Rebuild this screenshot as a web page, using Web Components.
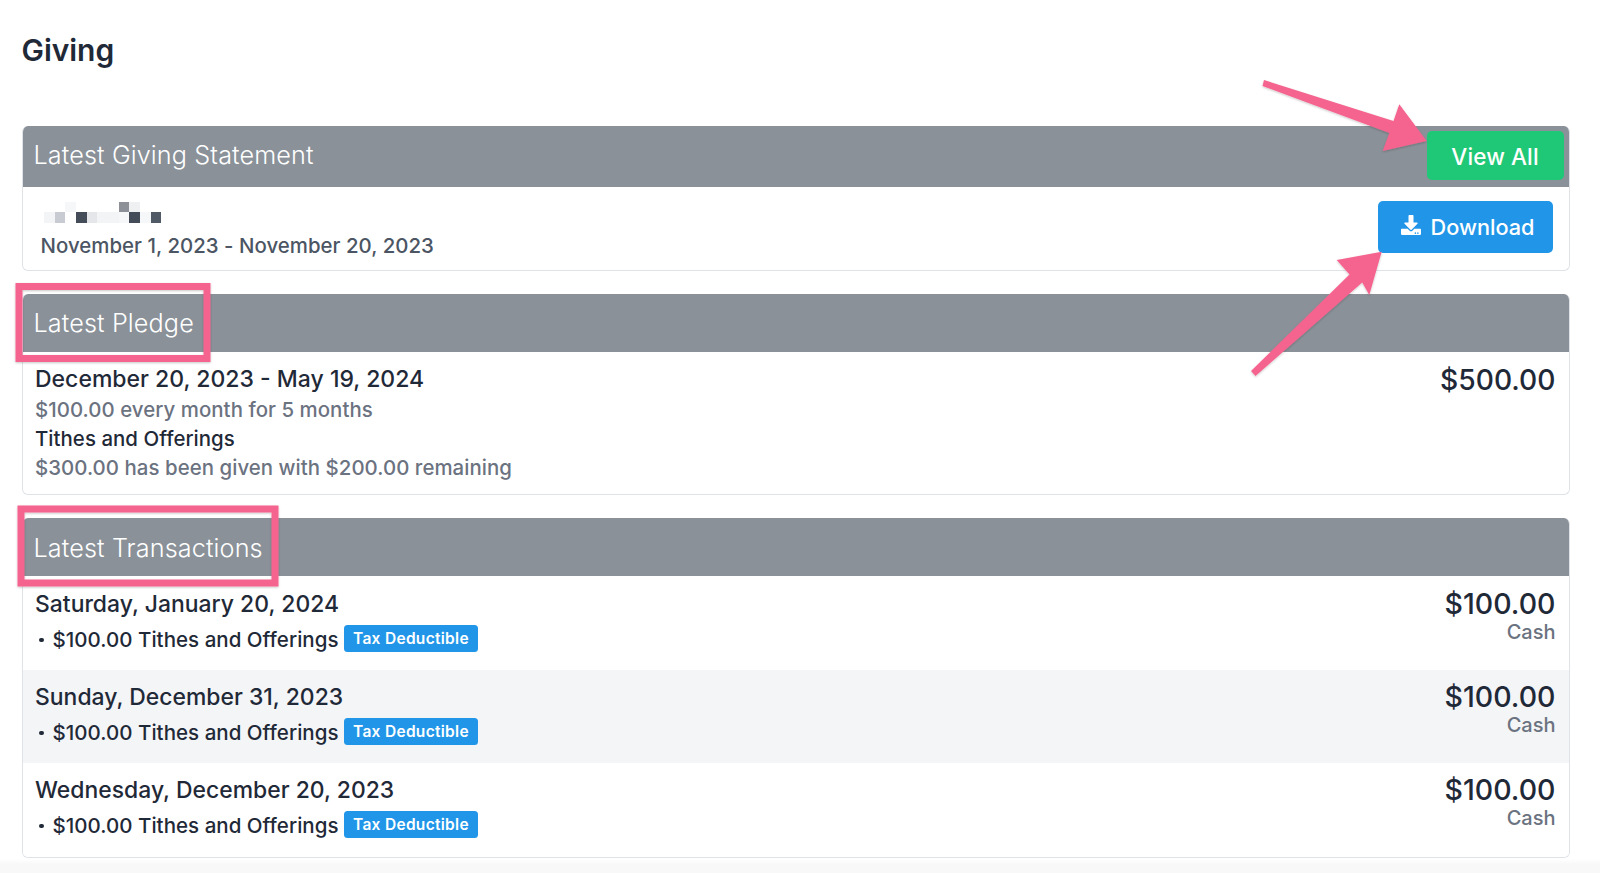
<!DOCTYPE html>
<html><head><meta charset="utf-8"><title>Giving</title>
<style>
html,body{margin:0;padding:0;background:#fff;}
body{font-family:Inter,"Liberation Sans",sans-serif;color:#1f2937;width:1600px;height:873px;overflow:hidden;position:relative;}
</style></head><body>
<giving-page>
  <page-title>Giving</page-title>
  <info-card heading="Latest Giving Statement" style="--hh:61px;--mt:0px;--to:-1px">
    <action-button slot="action" kind="green">View All</action-button>
    <statement-row range="November 1, 2023 - November 20, 2023"></statement-row>
  </info-card>
  <info-card heading="Latest Pledge" style="--hh:58px;--mt:23px;--to:0px">
    <pledge-row></pledge-row>
  </info-card>
  <info-card heading="Latest Transactions" style="--hh:58px;--mt:23px;--to:1px">
    <tx-row date="Saturday, January 20, 2024" first></tx-row>
    <tx-row date="Sunday, December 31, 2023" striped></tx-row>
    <tx-row date="Wednesday, December 20, 2023" last></tx-row>
  </info-card>
</giving-page>
<markup-layer></markup-layer>
<script>
function def(name, css, html){
  customElements.define(name, class extends HTMLElement{
    connectedCallback(){
      if(this.shadowRoot) return;
      const r=this.attachShadow({mode:'open'});
      const h=typeof html==='function'?html(this):html;
      r.innerHTML='<style>'+css+'</style>'+h;
    }
  });
}
def('giving-page',':host{display:block;box-sizing:border-box;padding:0 30.5px 0 21.5px;height:873px;background:linear-gradient(#fff 859px,#f8f8f9 864px)}','<slot></slot>');
def('page-title',':host{display:block;height:125.5px;box-sizing:border-box;padding-top:29.5px;font-size:30px;line-height:40px;font-weight:600;color:#1f2937;letter-spacing:-.05px}','<slot></slot>');
def('info-card',':host{display:block;margin-top:var(--mt);border:1px solid #dfe3e8;border-top:0;border-radius:6px;background:#fff;overflow:hidden}'+
 '.h{height:var(--hh);background:#8a9198;display:flex;align-items:center;justify-content:space-between;padding:0 6px 0 12px;margin:0 -1px;color:#fff;font-size:25.2px;line-height:30px;font-weight:300;letter-spacing:.12px}.h span{position:relative;top:var(--to)}',
 e=>`<div class="h"><span>${e.getAttribute('heading')}</span><slot name="action"></slot></div><slot></slot>`);
def('action-button',':host{display:inline-flex;align-items:center;justify-content:center;box-sizing:border-box;border-radius:5px;color:#fff;font-weight:500;font-size:22.5px;background:#1fc876;width:137px;height:49px;padding-top:2px;margin-top:-1px}'+
 ':host([kind=blue]){background:#2196e9;width:175px;height:52px;gap:10px;font-size:21.7px;padding:0 0 0 5px;margin-top:0}svg{width:20px;height:20px;fill:currentColor;margin-top:-3px}',
 e=>(e.getAttribute('kind')==='blue'?'<svg viewBox="0 0 512 512"><path d="M216 0h80c13.3 0 24 10.7 24 24v168h87.7c17.8 0 26.7 21.5 14.1 34.1L269.7 378.3c-7.5 7.5-19.8 7.5-27.3 0L90.1 226.1c-12.6-12.6-3.7-34.1 14.1-34.1H192V24c0-13.3 10.7-24 24-24zm296 376v112c0 13.3-10.7 24-24 24H24c-13.3 0-24-10.7-24-24V376c0-13.3 10.7-24 24-24h146.7l49 49c20.1 20.1 52.5 20.1 72.6 0l49-49H488c13.3 0 24 10.7 24 24zm-124 88c0-11-9-20-20-20s-20 9-20 20 9 20 20 20 20-9 20-20zm64 0c0-11-9-20-20-20s-20 9-20 20 9 20 20 20 20-9 20-20z"/></svg>':'')+'<slot></slot>');
def('pixel-mask',':host{display:grid;grid-template-columns:repeat(11,10.67px);grid-auto-rows:10.9px;width:max-content;margin-left:3.5px}',
 ()=>{const c=['','','#f6f7f8','','','','','#8d9096','#eef0f2','','','#f3f4f5','#c8ccd2','','#454c59','#e4e6e9','#f3f4f5','#f3f4f5','#f6f7f8','#454c59','#f6f7f8','#505a66'];
  return c.map(x=>`<i style="background:${x||'transparent'}"></i>`).join('');});
def('statement-row',':host{display:flex;justify-content:space-between;height:83px;box-sizing:border-box;padding:15px 16px 0 18px}'+
 '.r{font-size:20.4px;line-height:28px;font-weight:500;color:#4b5563;margin-top:9px;letter-spacing:.03px}.b{margin-top:-1px}',
 e=>`<div><pixel-mask></pixel-mask><div class="r">${e.getAttribute('range')}</div></div><div class="b"><action-button kind="blue">Download</action-button></div>`);
def('pledge-row',':host{display:flex;justify-content:space-between;height:142px;box-sizing:border-box;padding:11px 13px 0 12.500px}'+
 '.d{font-size:23px;line-height:32px;font-weight:500;color:#1f2937}.g,.t{font-size:20.4px;line-height:29px;font-weight:500;letter-spacing:.05px}.g{color:#6b7280}.t{color:#1f2937}.a{font-size:28.2px;line-height:32px;font-weight:500;color:#1f2937;margin-top:1px}',
 `<div><div class="d">December 20, 2023 - May 19, 2024</div><div class="g">$100.00 every month for 5 months</div><div class="t">Tithes and Offerings</div><div class="g">$300.00 has been given with $200.00 remaining</div></div><div class="a">$500.00</div>`);
def('tag-badge',':host{display:inline-flex;align-items:center;height:27px;padding:0 9px;border-radius:3.5px;background:#2196e9;color:#fff;font-size:15.5px;font-weight:600;letter-spacing:.3px;margin-top:-1px}','<slot></slot>');
def('tx-row',':host{display:flex;justify-content:space-between;height:93px;box-sizing:border-box;padding:11px 13px 0 12.500px;background:#fff}:host([striped]){background:#f4f5f7}:host([first]),:host([last]){height:94px}:host([first]){padding-top:12px}'+
 '.d{font-size:22.9px;line-height:32px;font-weight:500;color:#1f2937;letter-spacing:.02px}.l{display:flex;align-items:center;gap:5.5px;margin-top:6px;height:27px;font-size:20.5px;font-weight:500;color:#1f2937;padding-left:4px;letter-spacing:.03px}'+
 '.dot{width:4.5px;height:4.5px;border-radius:50%;background:#1f2937;margin-right:3.500px;margin-top:2px}.r{text-align:right}.a{font-size:28.5px;line-height:32px;font-weight:500;color:#1f2937}.c{font-size:20px;line-height:24px;font-weight:500;color:#6b7280}',
 e=>`<div><div class="d">${e.getAttribute('date')}</div><div class="l"><span class="dot"></span><span>$100.00 Tithes and Offerings</span><tag-badge>Tax Deductible</tag-badge></div></div><div class="r"><div class="a">$100.00</div><div class="c">Cash</div></div>`);
def('markup-layer',':host{position:absolute;left:0;top:0;width:1600px;height:873px;pointer-events:none}svg{position:absolute;left:0;top:0}',
 `<svg width="1600" height="873" viewBox="0 0 1600 873">
  <defs><filter id="s" x="-5%" y="-5%" width="110%" height="110%"><feDropShadow dx="0" dy="1" stdDeviation="1" flood-color="#000" flood-opacity=".22"/></filter></defs>
  <g fill="none" stroke="#f5648f" stroke-width="7" filter="url(#s)">
   <rect x="19" y="286.500" width="188" height="72"/>
   <rect x="21" y="509" width="254" height="74"/>
  </g>
  <g fill="#f5648f" filter="url(#s)">
   <polygon points="1264,80 1393.500,121 1399.300,104.300 1426.700,141 1382.700,151 1389.300,133 1262.500,86"/>
   <polygon points="1251,371 1349.500,274.500 1336.700,260 1381.700,251.700 1369.300,295 1362.200,282.500 1255.500,376"/>
  </g></svg>`);
</script>
</body></html>
